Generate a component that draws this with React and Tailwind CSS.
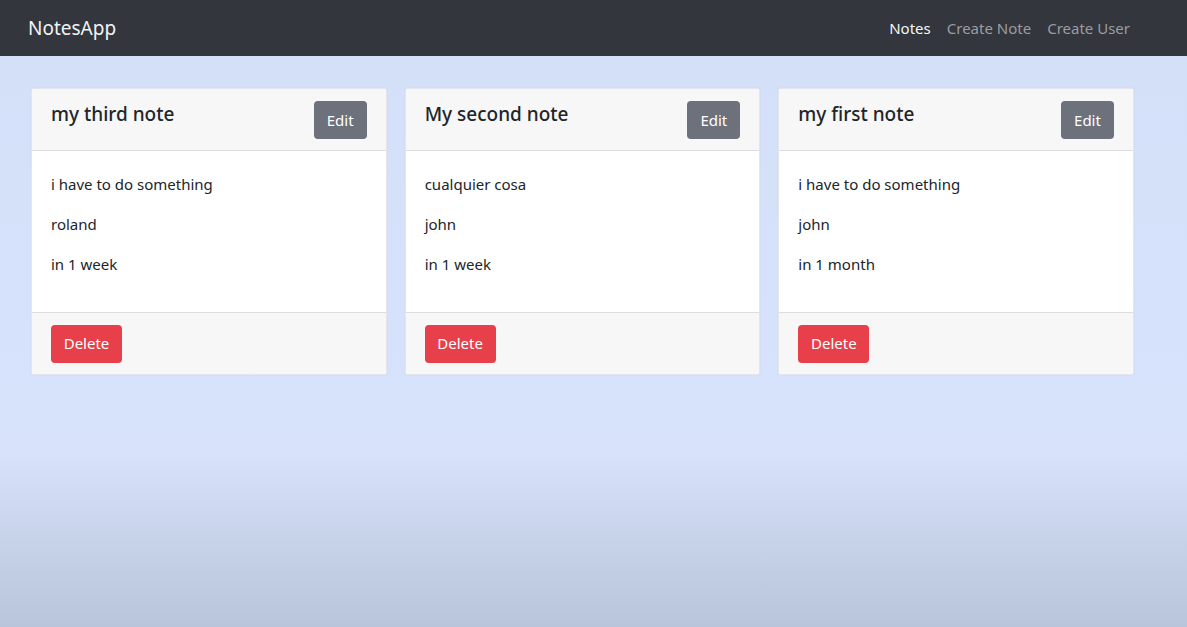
import React from "react";

const notes = [
  { title: "my third note", content: "i have to do something", author: "roland", date: "in 1 week" },
  { title: "My second note", content: "cualquier cosa", author: "john", date: "in 1 week" },
  { title: "my first note", content: "i have to do something", author: "john", date: "in 1 month" },
];

function Card({ note }) {
  return (
    <div className="flex flex-col rounded-[3px] border border-[#e3e6ec] bg-white shadow-[0_0_2px_rgba(0,0,0,0.06)]">
      <div className="flex h-[62px] items-start justify-between border-b border-[#dcdde0] bg-[#f7f7f8] pl-[19px] pr-[19px] pt-[12px]">
        <h3 className="text-[19px] leading-[26px] font-medium text-[#212529]">{note.title}</h3>
        <button className="h-[38px] w-[53px] rounded-[4px] bg-[#6c717b] text-[15px] text-white">Edit</button>
      </div>
      <div className="flex h-[161px] flex-col gap-4 bg-white pl-[19px] pr-5 pt-[21px]">
        <p className="text-[15px] leading-[24px] text-[#212529]">{note.content}</p>
        <p className="text-[15px] leading-[24px] text-[#212529]">{note.author}</p>
        <p className="text-[15px] leading-[24px] text-[#212529]">{note.date}</p>
      </div>
      <div className="flex h-[62px] items-center border-t border-[#dcdde0] bg-[#f7f7f8] px-[19px]">
        <button className="h-[38px] w-[71px] rounded-[4px] bg-[#e8404a] text-[15px] text-white">Delete</button>
      </div>
    </div>
  );
}

export default function App() {
  return (
    <div
      className="flex h-[627px] w-[1187px] flex-col bg-[linear-gradient(180deg,#d3e0f8_0%,#d6e2fb_55%,#d8e3fb_72%,#c7d3e9_86%,#b8c5db_100%)]"
      style={{ fontFamily: '"Noto Sans", "Open Sans", sans-serif' }}
    >
      <nav className="flex h-[56px] items-center justify-between bg-[#33363d] pl-7 pr-[57px]">
        <span className="text-[19px] text-[#f2f3f5]">NotesApp</span>
        <div className="flex items-center gap-4 text-[15px]">
          <span className="text-[#f4f5f7]">Notes</span>
          <span className="text-[#9a9da3]">Create Note</span>
          <span className="text-[#9a9da3]">Create User</span>
        </div>
      </nav>
      <div className="grid grid-cols-3 gap-[18px] pl-[31px] pr-[53px] pt-[32px]">
        {notes.map((n) => (
          <Card key={n.title} note={n} />
        ))}
      </div>
    </div>
  );
}
